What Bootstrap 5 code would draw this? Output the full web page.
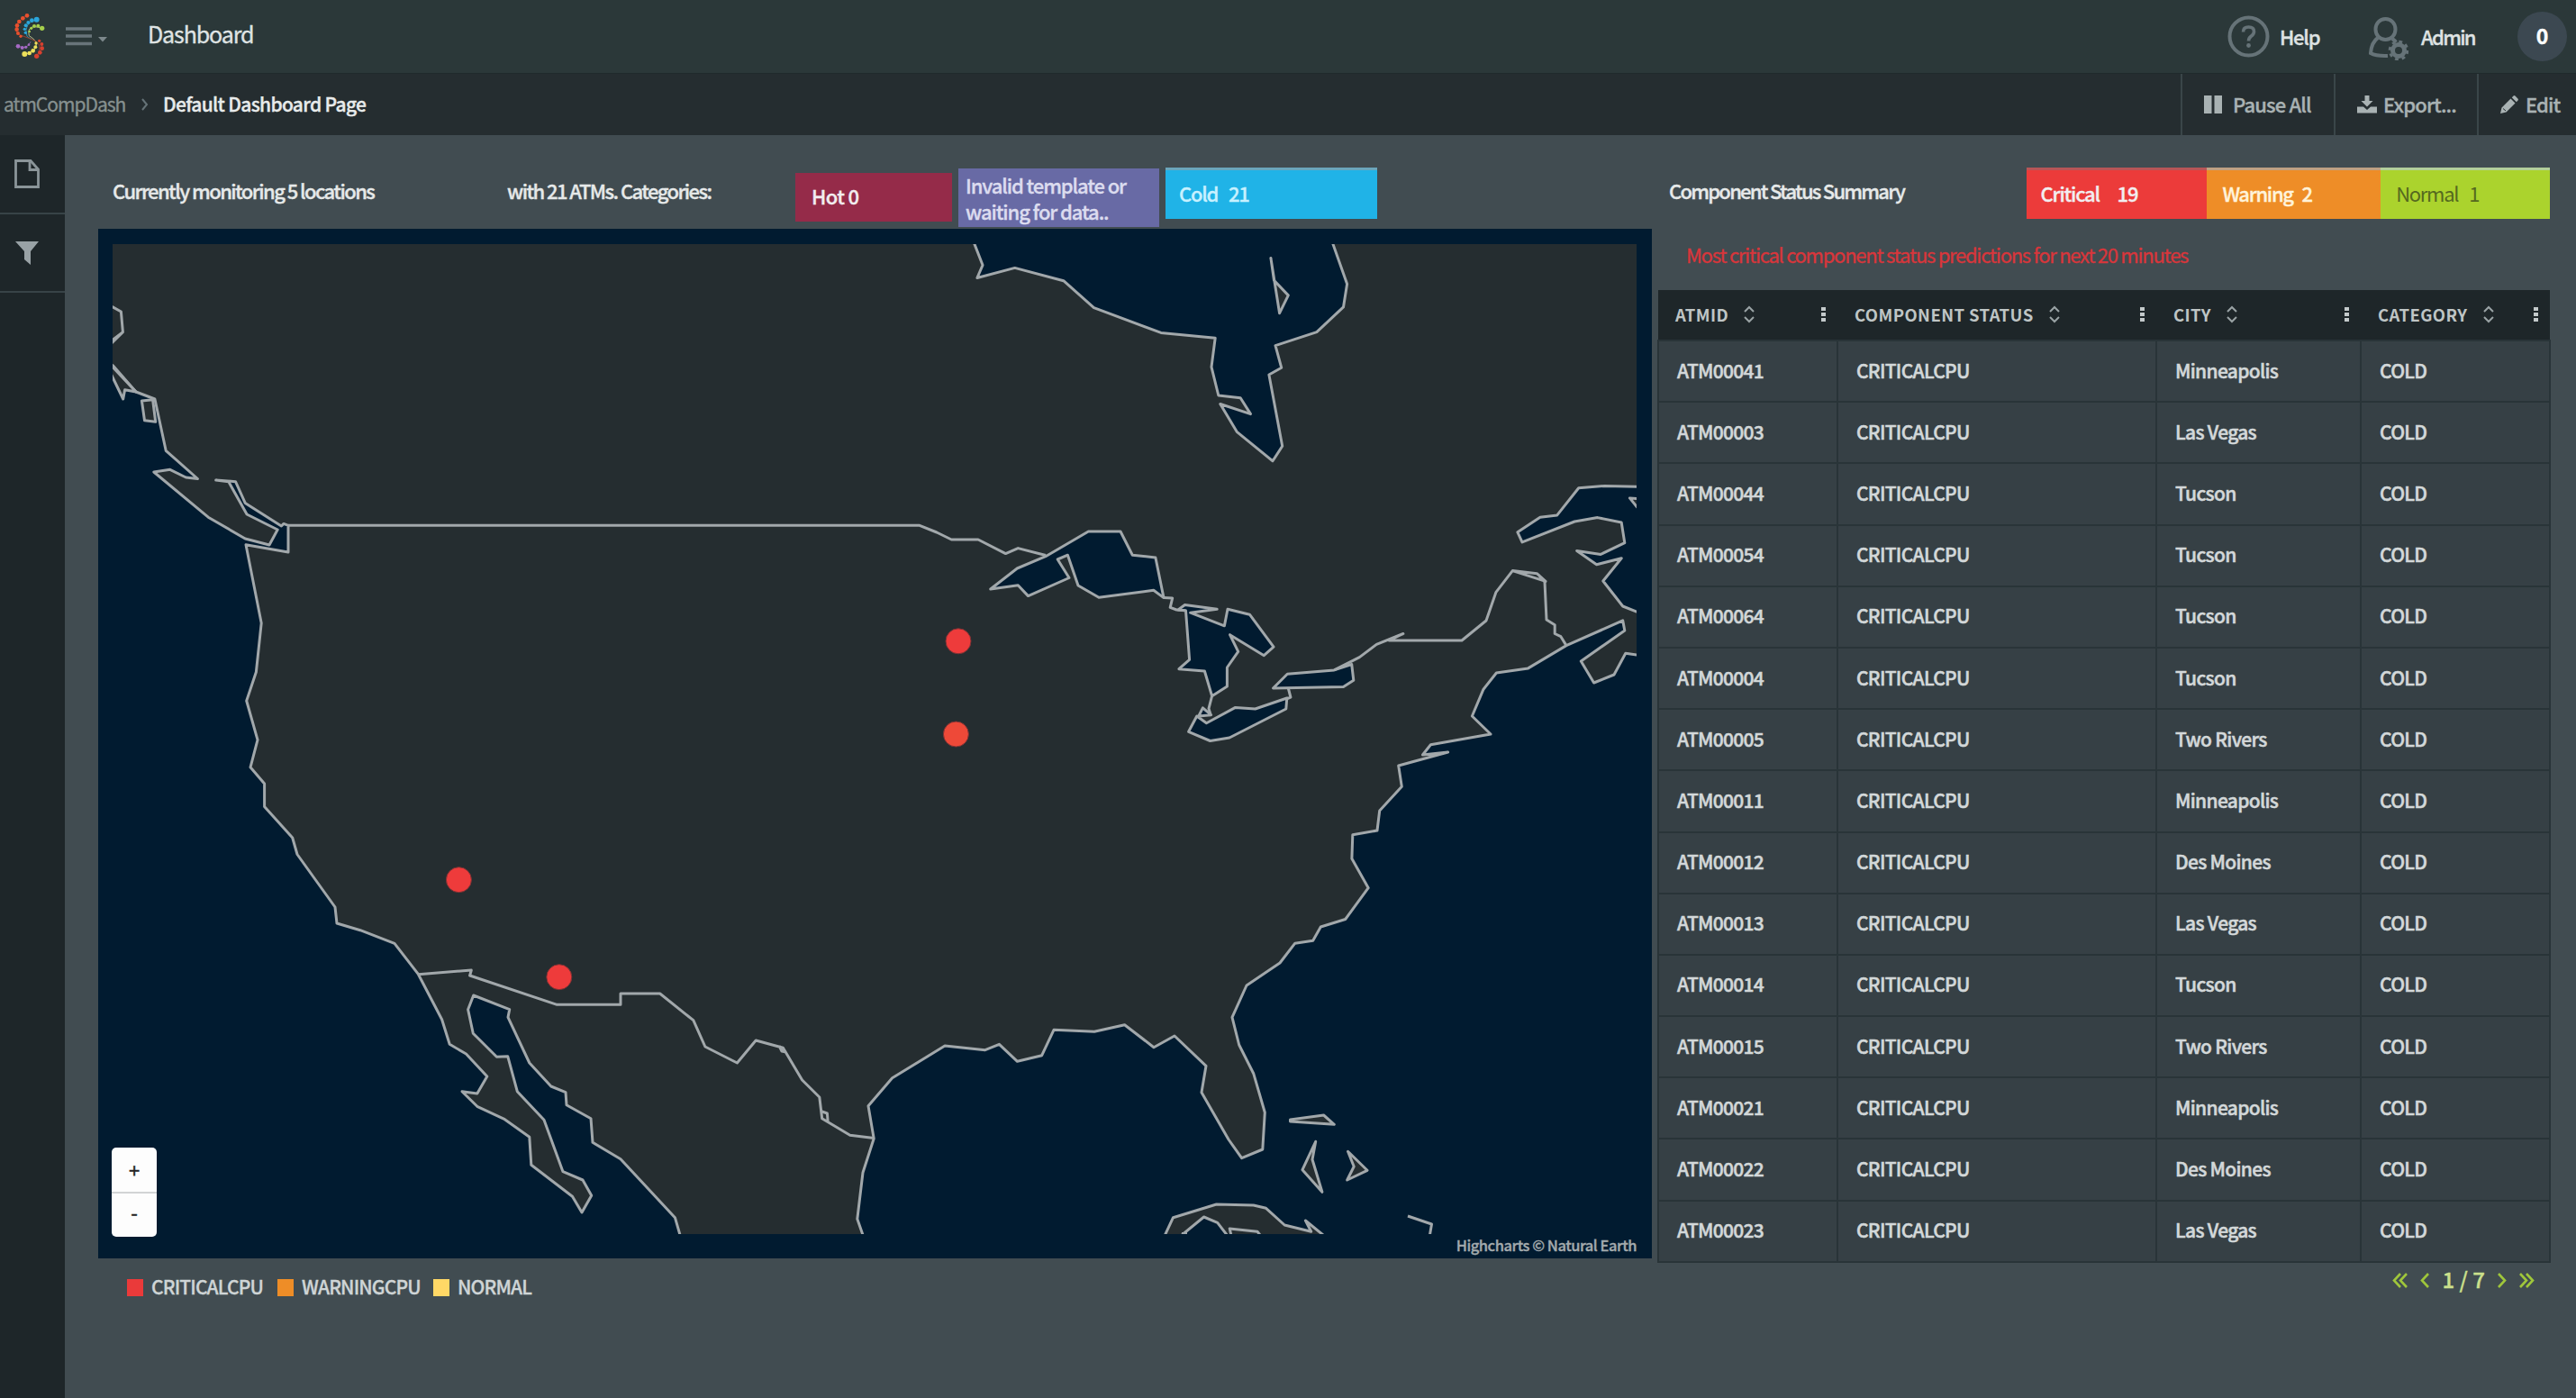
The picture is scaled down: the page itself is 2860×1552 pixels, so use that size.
<!DOCTYPE html>
<html lang="en">
<head>
<meta charset="utf-8">
<title>Dashboard</title>
<link href="https://cdn.jsdelivr.net/npm/bootstrap@5.3.0/dist/css/bootstrap.min.css" rel="stylesheet">
<style>
  body { font-family: "Noto Sans CJK SC", "Noto Sans", sans-serif; background: #414c51; color: #e6e9e9; font-size: 22px; line-height: 30px; overflow: hidden; -webkit-text-stroke: .35px currentColor; }
  .page { height: 1552px; }
  .page span, .page td, .page th { white-space: nowrap; }
  .topbar { height: 81px; background: #2b3839; color: #dfe3e3; }
  .brand-logo { margin-left: 14px; }
  .menu-icon { margin-left: 21px; }
  .app-title { margin-left: 45px; padding-bottom: 7px; font-size: 25px; letter-spacing: -1.1px; }
  .help-text { width: 99px; margin-left: 11px; padding-bottom: 2px; letter-spacing: -1.2px; font-weight: 500; }
  .admin-text { width: 107px; margin-left: 14px; padding-bottom: 2px; letter-spacing: -1.7px; font-weight: 500; }
  .count-dot { width: 55px; height: 55px; margin-right: 10px; padding-bottom: 3px; background: #3c4851; color: #fff; font-size: 23px; }
  .subbar { height: 69px; background: #252d30; color: #a9b2b3; border-top: 1px solid #1f2a2c; }
  .subbar span { padding-bottom: 2px; }
  .crumb { padding-left: 4px; width: 157px; font-size: 21px; letter-spacing: -1px; color: #86908f; }
  .crumb-current { margin-left: 16px; font-size: 21px; letter-spacing: -.68px; font-weight: 500; color: #e8ebeb; }
  .tool { border-left: 2px solid #3a4649; height: 68px; letter-spacing: -.85px; font-weight: 500; padding-left: 24px; }
  .rail { width: 72px; background: #1e2629; }
  .rail-item { border-bottom: 2px solid #384347; height: 87.500px; padding: 1px 12px 0 0; }
  .left-pane { width: 1762px; padding-left: 37px; }
  .right-pane { width: 991px; margin-left: 6px; }
  .summary { height: 104px; font-weight: 500; letter-spacing: -1.57px; }
  .intro-text { margin-top: 46px; }
  .tile { color: #f2eef0; height: 57px; margin-top: 36px; border-top: 3px solid transparent; display: flex; align-items: center; padding-bottom: 5px; letter-spacing: -1.3px; }
  .tile-hot { width: 174px; height: 54px; margin-top: 42px; background: #952b49; padding-left: 18px; letter-spacing: -.6px; border: 0; padding-bottom: 4px; }
  .tile-invalid { width: 223px; height: 65px; margin: 37px 7px 0; background: #686aa5; color: #dcdcef; padding-left: 8px; line-height: 29px; letter-spacing: -1.1px; border: 0; padding-bottom: 0; }
  .tile-cold { width: 235px; background: #20b3e7; border-top-color: #6aa6bc; color: #c8f1ff; padding-left: 15px; }
  .tile-critical { width: 201px; background: #ec3b3a; border-top-color: #b85557; padding-left: 16px; letter-spacing: -1.2px; }
  .tile-warning { width: 193px; background: #ee8d27; border-top-color: #c0a183; padding-left: 17px; color: #fff3da; }
  .tile-normal { width: 188px; background: #abd32d; border-top-color: #b3cf9a; padding-left: 17px; color: #55691f; font-weight: 400; -webkit-text-stroke: 0; }
  .map-panel { width: 1725px; height: 1143px; background: #011b30; padding: 17px 17px 27px 16px; }
  .map-panel svg { display: block; }
  .zoom-box { left: 15px; top: 1020px; width: 50px; height: 99px; background: #fdfdfd; border-radius: 5px; color: #222; }
  .zoom-box > div { height: 49px; padding-bottom: 1px; }
  .zoom-box > div + div { border-top: 2px solid #d2d4d5; padding-bottom: 7px; }
  .credits { right: 17px; bottom: 1px; font-size: 16.5px; letter-spacing: -.48px; color: #a3aaad; font-weight: 500; line-height: 28px; }
  .legend-row { margin-top: 16px; padding-left: 32px; font-size: 21px; letter-spacing: -.85px; font-weight: 500; color: #cfd5d6; }
  .legend-row span { padding-bottom: 2px; }
  .swatch { width: 18px; height: 19px; margin-right: 9px; }
  .prediction { height: 68px; padding: 13px 0 0 32px; color: #d8363b; letter-spacing: -1.27px; }
  .atm-grid { table-layout: fixed; width: 990px; border-collapse: collapse; }
  .atm-grid th { background: #1e2629; height: 56px; padding: 0; font-size: 18.5px; letter-spacing: .42px; color: #bfc5c5; font-weight: 700; -webkit-text-stroke: 0; }
  .atm-grid td { height: 68.2px; background: #364045; border: 2px solid #293438; padding: 0 0 3px 20px; font-size: 21px; letter-spacing: -.7px; font-weight: 500; color: #d3d8d9; -webkit-text-stroke: .5px currentColor; }
  .head-cell { padding: 0 13px 2px 19px; }
  .pager { margin-top: 3px; padding-right: 17px; color: #9fc63b; font-weight: 500; font-size: 24px; gap: 14px; }
</style>
</head>
<body>
<div class="page d-flex flex-column">
  <header class="topbar d-flex align-items-center flex-shrink-0">
    <svg class="brand-logo" width="38" height="54" viewBox="42 15 114 162">
      <g fill="none" stroke-width="3" opacity=".8"><path d="M122 38Q76 50 90 94L105 104" stroke="#35a5c9"/><path d="M140 67Q88 50 97 92Q130 112 118 132Q110 150 82 153" stroke="#d8dca0"/><path d="M60 127Q90 140 102 112" stroke="#9a63b5"/><path d="M90 25Q40 50 58 86L106 104Q150 120 122 160" stroke="#b5432c"/></g>
      <g fill="#e8502e"><circle cx="90" cy="25" r="7"/><circle cx="76" cy="34" r="7"/><circle cx="64" cy="45" r="7"/><circle cx="57" cy="58" r="7"/><circle cx="56" cy="71" r="7"/><circle cx="60" cy="84" r="6"/><circle cx="69" cy="94" r="5"/></g>
      <g fill="#2ba6dc"><circle cx="122" cy="38" r="9"/><circle cx="106" cy="41" r="7"/><circle cx="94" cy="48" r="6"/><circle cx="86" cy="58" r="6"/><circle cx="82" cy="70" r="5"/><circle cx="85" cy="82" r="5"/></g>
      <g fill="#a5cf4c"><circle cx="140" cy="67" r="8"/><circle cx="127" cy="59" r="6"/><circle cx="114" cy="60" r="6"/><circle cx="104" cy="67" r="5"/><circle cx="98" cy="78" r="4"/></g>
      <g fill="#ece05a"><circle cx="82" cy="153" r="9"/><circle cx="98" cy="150" r="7"/><circle cx="110" cy="142" r="7"/><circle cx="118" cy="130" r="6"/><circle cx="120" cy="117" r="5"/></g>
      <g fill="#a56ac4"><circle cx="60" cy="127" r="7"/><circle cx="74" cy="132" r="6"/><circle cx="86" cy="130" r="5"/><circle cx="96" cy="122" r="4"/></g>
      <g fill="#d8402f"><circle cx="122" cy="160" r="8"/><circle cx="133" cy="148" r="7"/><circle cx="140" cy="134" r="7"/><circle cx="139" cy="120" r="6"/><circle cx="131" cy="109" r="5"/></g>
    </svg>
    <svg class="menu-icon" width="46" height="26" viewBox="0 0 46 26"><path d="M0 4H29M0 12H29M0 20.500H29" stroke="#68747a" stroke-width="3.400"/><path d="M36 13H46L41 18.500Z" fill="#7d888c"/></svg>
    <span class="app-title">Dashboard</span>
    <svg class="ms-auto" width="47" height="47" viewBox="0 0 47 47"><circle cx="23.500" cy="23.500" r="21" fill="none" stroke="#667378" stroke-width="4"/><path d="M17.500 18.500Q17.500 13 23.500 13Q29.500 13 29.500 18Q29.500 21 26 23.500Q23.500 25.500 23.500 28.500" fill="none" stroke="#667378" stroke-width="3.600"/><circle cx="23.500" cy="33.500" r="2.400" fill="#667378"/></svg>
    <span class="help-text">Help</span>
    <svg class="mt-1" width="44" height="48" viewBox="0 0 44 48" fill="none" stroke="#667378"><path d="M18.500 2C25 2 29.500 7 29.500 13.500S25 25 18.500 25S7.500 20 7.500 13.500S12 2 18.500 2Z" stroke-width="4"/><path d="M10 23Q3 28 2 40Q8 43.500 21 43" stroke-width="4"/><path d="M26 24Q29 26 30 28" stroke-width="4"/><circle cx="33" cy="37" r="6.500" stroke-width="5"/><circle cx="33" cy="37" r="9.800" stroke-width="3" stroke-dasharray="3.850 3.850"/></svg>
    <span class="admin-text">Admin</span>
    <div class="count-dot rounded-circle d-flex align-items-center justify-content-center fw-bold">0</div>
  </header>

  <div class="subbar d-flex align-items-center flex-shrink-0">
    <span class="crumb">atmCompDash</span>
    <svg width="8" height="14" viewBox="0 0 8 14"><path d="M1 1L6 7L1 13" fill="none" stroke="#667378" stroke-width="2"/></svg>
    <span class="crumb-current">Default Dashboard Page</span>
    <div class="tool d-flex align-items-center ms-auto" style="width:170px"><svg width="20" height="20" style="margin-right:12px"><path d="M0 0H8.500V20H0ZM11.500 0H20V20H11.500Z" fill="#a9b2b3"/></svg><span>Pause All</span></div>
    <div class="tool d-flex align-items-center" style="width:159px"><svg width="22" height="20" viewBox="0 0 22 20" fill="#a9b2b3" style="margin-right:7px"><path d="M8.500 0H13.500V6H17.500L11 12.500L4.500 6H8.500Z"/><path d="M0 12.500H7L11 16L15 12.500H22V19.500H0Z"/></svg><span>Export...</span></div>
    <div class="tool d-flex align-items-center" style="width:110px"><svg class="me-2" width="20" height="20" viewBox="0 0 20 20" fill="#a9b2b3"><path d="M0 20L1.500 13.500L11.500 3.500L16.500 8.500L6.500 18.500ZM12.800 2.200L14.500 .500Q15.500 -.300 16.500 .600L19.400 3.500Q20.300 4.500 19.500 5.500L17.800 7.200Z"/><path d="M3 14.500L6 17" stroke="#252d30" stroke-width="1"/></svg><span>Edit</span></div>
  </div>

  <div class="d-flex flex-grow-1">
    <nav class="rail flex-shrink-0">
      <div class="rail-item d-flex align-items-center justify-content-center"><svg width="28" height="32" viewBox="0 0 28 32" fill="none" stroke="#8b9599" stroke-width="2.800"><path d="M1.500 1.500H18L26.500 11V30.500H1.500Z"/><path d="M17 2V11.500H26"/></svg></div>
      <div class="rail-item d-flex align-items-center justify-content-center"><svg width="26" height="26" viewBox="0 0 26 26"><path d="M0 0H26L17 11V26L10 20V11Z" fill="#99a2a6"/></svg></div>
    </nav>

    <section class="left-pane flex-shrink-0">
      <div class="summary d-flex align-items-start">
        <span class="intro-text" style="width:438px;margin-left:16px">Currently monitoring 5 locations</span>
        <span class="intro-text" style="width:320px">with 21 ATMs. Categories:</span>
        <div class="tile tile-hot"><span>Hot&nbsp;0</span></div>
        <div class="tile tile-invalid"><div><span>Invalid template or</span><br><span>waiting for data..</span></div></div>
        <div class="tile tile-cold"><span style="width:55px">Cold</span><span>21</span></div>
      </div>

      <div class="map-panel position-relative">
        <svg width="1692" height="1099" viewBox="125 271 1692 1099" fill="#252d30" stroke="#a2a8ab" stroke-width="3" stroke-linejoin="round">
          <path d="M110 260V396L125.600 406L150.900 435L171.900 443L184.200 500.300L219.400 531.500L206.400 530L188.800 521.300L170.800 524L231.200 574.200L272.200 598L299 605L308.200 588L274.100 571L253.800 534.700L239.700 533L261.500 534.700L272.200 558.400L312.400 584L315 581.400L320 583.300V613L273 604.700L290.200 691.700L284.400 746L273.700 778L286 821.400L278 851.800L293.600 870V895.600L324.700 930L330 948.500L372 1007L374 1025L400 1032.700L438 1047.300L464.500 1081.700L490.600 1131.700L499.200 1159.300L517.500 1170L540.800 1195L529.800 1214L513 1211.700L529.800 1228.300L560.400 1242.700L587.800 1262.300L589.800 1293.300L635.500 1328.300L646 1346L656.700 1327.300L647 1310L625 1300.700L604 1243.300L574.300 1211.700L563.700 1172.700L551.400 1173.300L525.300 1147.300L519.600 1120.700L525.700 1105L565.700 1120.700L564 1129.300L587.800 1180L611.800 1206L628 1212.700L629 1226.700L656 1241.700L658 1268.300L689 1286.700L749.400 1351.700L755 1371L757 1380H960L958 1371L951.800 1353.300L958 1301.700L970.200 1264L964 1227.700L990.600 1196.700L1049 1161L1093.800 1165.700L1109.400 1159.300L1129.500 1178.300L1156.700 1171.700L1170 1143.300L1215 1145.300L1248.600 1137.700L1281 1162.700L1304 1150L1339 1183.300L1334 1212.700L1364 1265L1378.600 1285.700L1401.800 1276L1404.300 1235L1391.700 1191.700L1375.700 1160L1368 1129.300L1384 1094L1421 1069L1437.800 1047.200L1457.700 1044.200L1466.300 1029L1493.700 1020.500L1519.200 985.700L1500.900 953.300L1501.800 926.700L1529 922L1531.700 900L1556.300 873.300L1552.700 850L1607.600 835L1579.500 838L1588.400 826.700L1655 815L1634.400 795L1647 765.200L1661.400 747L1696.600 741.900L1739 716.600L1801.700 688.900L1803.800 700L1755.300 734L1769.600 758L1792 749L1804.800 725.300L1817 726.900L1835 729V687L1817 679L1801.700 673L1779.800 645L1800.200 619.700L1772.600 626.800L1750.700 611.400L1777.200 615.400L1803.800 602.700L1800.200 580L1773.700 574.600L1748.200 579L1690 601.900L1684.900 590.800L1709.900 574.200L1728.800 571.900L1752.700 541.800L1781.300 539.400L1817 540.200H1835V260H1476L1479.800 270.600L1495.600 315.200L1491.500 340.900L1461.900 368.600L1416 383.600L1422.700 408.200L1408.900 416L1423.700 495.200L1413 511.800L1373.200 479.300L1354.800 448.500L1388.500 459.600L1377.200 441.800L1352.800 439L1345 407.400L1349.200 375.300L1289 369.400L1214.500 341.700L1180.800 311.700L1126.700 297.400L1084.900 308.500L1091 294.300L1081.800 270.600L1079 260Z"/>
          <path d="M115 336L125.600 341L134.400 346L136.400 368.600L125.600 377L115 383M136.400 368.600L115 390M110 398L125.600 409L150.900 435" fill="none"/>
          <path d="M115 398L125.600 420L136.700 443L138.600 432.700L150.900 435L125.600 408Z"/>
          <path d="M157.400 445L169.600 443.800L172.700 468.300L160.500 466.700ZM1410.900 286.400L1414.500 311.300L1430.300 327.900L1420.600 347.700ZM1835 555L1809.400 552.900L1817 562.400L1835 578Z"/>
          <path d="M1432.500 1243L1469.600 1238L1481.300 1248.300L1432.500 1245ZM1460.700 1267.300L1446 1298.700L1467.900 1323.300L1457 1287.300ZM1496.500 1278.300L1518 1299.300L1495.700 1310L1503.200 1295Z"/>
          <path d="M1290 1382L1293.600 1370.700L1302.500 1351.700L1350.500 1337L1391.700 1338L1405.600 1341.300L1426.200 1360L1455.700 1367.300L1449.400 1355L1480 1380Z"/>
          <path d="M1306 1376L1312.600 1370.700L1336.600 1351L1351.700 1357.300L1366 1376Z" fill="#011b30"/>
          <path d="M1563 1350L1589.500 1359L1586.600 1376M1368 1376L1365.200 1364L1396 1367.300L1403 1376M1312 1369.500H1318" fill="none"/>
          <g fill="#011b30">
            <path d="M1099.700 654L1129.300 631L1160.900 617.700L1208.400 590H1244L1257.300 616.200L1282.900 619L1292 663.600L1280.800 655.300L1220 663.200L1197 650L1185.400 616.200L1174.200 621L1187 641.500L1141.500 661.600L1130.300 649.800Z"/>
            <path d="M1308 677L1315.500 671.500L1351.200 676.300L1321.600 680.200L1359.400 694.800L1363 676.300L1387.400 682.200L1414 718.200L1403.300 727.700L1365.500 704.700L1374.700 723.300L1362.400 741V762L1345.600 772.700L1337.400 745L1308.900 742.700L1320.600 732.400L1316.500 677.800Z"/>
            <path d="M1328.800 795L1339.500 802.800L1371.600 785.400L1393.600 787L1428.800 775L1427.800 787L1365 819L1343.600 822.500L1319.600 812.300ZM1335.400 785.800L1344.600 793.700L1330.800 795Z"/>
            <path d="M1413.500 764L1429.300 748.200L1481.300 743.900L1500.700 737.500L1502.800 755.300L1491.500 762.500Z"/>
          </g>
          <g fill="none">
            <path d="M320 583.300H1021L1040 591L1056.300 599H1086L1116.500 614.600L1130.300 608.600L1161 616.500M1292 663.600L1301.700 664L1299.200 674.300L1306.300 677L1315.500 677.800M1345.600 772.700L1342 786.600L1344 793M1430.300 764L1432.900 774L1428 776M1481.300 743.900L1509.400 729.600L1528.300 715.400L1557.900 703.500L1542.500 711H1623L1650 689L1661 657.300L1679.300 633.600L1706.300 636.700L1716 645.400L1679.300 633.600M1708 638L1715 646L1717 688L1726.200 693.700V703.500L1732.900 706.700L1739 716.600"/>
            <path d="M464.500 1081.700L523.300 1077L521.600 1083L618.400 1115.300H689V1103H732.700L769.800 1132.700L782.900 1162L818.400 1180L839.200 1155L869.400 1163.300L890.600 1199L909.800 1218L912.700 1241.700L943.700 1260.300L970.200 1263.500M912.700 1234L918.400 1236L919.200 1246M865 1161L868 1167L873 1168"/>
          </g>
          <g stroke="#7d3234" stroke-width="1" fill="#ee3b3b"><circle cx="1064" cy="711.800" r="14"/><circle cx="1061.400" cy="815" r="14" fill="#ee4938"/><circle cx="509.400" cy="976.700" r="14"/><circle cx="620.800" cy="1084.700" r="14"/></g>
        </svg>
        <div class="zoom-box position-absolute">
          <div class="d-flex align-items-center justify-content-center"><span>+</span></div>
          <div class="d-flex align-items-center justify-content-center"><span>-</span></div>
        </div>
        <span class="credits position-absolute">Highcharts © Natural Earth</span>
      </div>

      <div class="legend-row d-flex align-items-center">
        <div class="swatch" style="background:#ea3a3a"></div><span style="width:140px">CRITICALCPU</span>
        <div class="swatch" style="background:#ee8d27"></div><span style="width:146px">WARNINGCPU</span>
        <div class="swatch" style="background:#ffd866"></div><span>NORMAL</span>
      </div>
    </section>

    <section class="right-pane flex-shrink-0">
      <div class="summary d-flex align-items-start">
        <span class="intro-text" style="width:397px;margin-left:13px;letter-spacing:-1.75px">Component Status Summary</span>
        <div class="tile tile-critical"><span style="width:85px">Critical</span><span>19</span></div>
        <div class="tile tile-warning"><span style="width:88px">Warning</span><span>2</span></div>
        <div class="tile tile-normal"><span style="width:81px">Normal</span><span>1</span></div>
      </div>
      <div class="prediction"><span>Most critical component status predictions for next 20 minutes</span></div>
      <table class="atm-grid">
        <colgroup><col style="width:199px"><col style="width:354px"><col style="width:227px"><col style="width:210px"></colgroup>
        <thead><tr id="gridHead"></tr></thead>
        <tbody id="gridBody"></tbody>
      </table>
      <div class="pager d-flex align-items-center justify-content-end">
        <svg width="17" height="17" viewBox="0 0 17 17" fill="none" stroke="#9fc63b" stroke-width="2.600"><path d="M9 1L2 8.500L9 16M16 1L9 8.500L16 16"/></svg>
        <svg width="10" height="17" viewBox="0 0 10 17" fill="none" stroke="#9fc63b" stroke-width="2.600"><path d="M9 1L2 8.500L9 16"/></svg>
        <span style="color:#cbe08c;padding-bottom:3px">1 / 7</span>
        <svg width="10" height="17" viewBox="0 0 10 17" fill="none" stroke="#9fc63b" stroke-width="2.600"><path d="M1 1L8 8.500L1 16"/></svg>
        <svg width="17" height="17" viewBox="0 0 17 17" fill="none" stroke="#9fc63b" stroke-width="2.600"><path d="M1 1L8 8.500L1 16M8 1L15 8.500L8 16"/></svg>
      </div>
    </section>
  </div>
</div>
<script src="https://cdn.jsdelivr.net/npm/bootstrap@5.3.0/dist/js/bootstrap.bundle.min.js"></script>
<script>
  const columns = ["ATMID", "COMPONENT STATUS", "CITY", "CATEGORY"];
  const atms = [["41", "Minneapolis"], ["03", "Las Vegas"], ["44", "Tucson"], ["54", "Tucson"], ["64", "Tucson"], ["04", "Tucson"], ["05", "Two Rivers"], ["11", "Minneapolis"], ["12", "Des Moines"], ["13", "Las Vegas"], ["14", "Tucson"], ["15", "Two Rivers"], ["21", "Minneapolis"], ["22", "Des Moines"], ["23", "Las Vegas"]];
  const sortIcon = '<svg width="12" height="20" viewBox="0 0 12 20" fill="none" stroke="#9aa3a5" stroke-width="2"><path d="M1 7L6 2L11 7M1 13L6 18L11 13"/></svg>';
  const dotsIcon = '<svg class="ms-auto" width="5" height="16" fill="#c3c9ca"><path d="M0 0H5V4H0ZM0 6H5V10H0ZM0 12H5V16H0Z"/></svg>';
  document.getElementById("gridHead").innerHTML = columns.map(c =>
    `<th scope="col"><div class="head-cell d-flex align-items-center"><span style="margin-right:17px">${c}</span>${sortIcon}${dotsIcon}</div></th>`).join("");
  document.getElementById("gridBody").innerHTML = atms.map(([id, city]) =>
    `<tr><td>ATM000${id}</td><td>CRITICALCPU</td><td>${city}</td><td>COLD</td></tr>`).join("");
</script>
</body>
</html>
